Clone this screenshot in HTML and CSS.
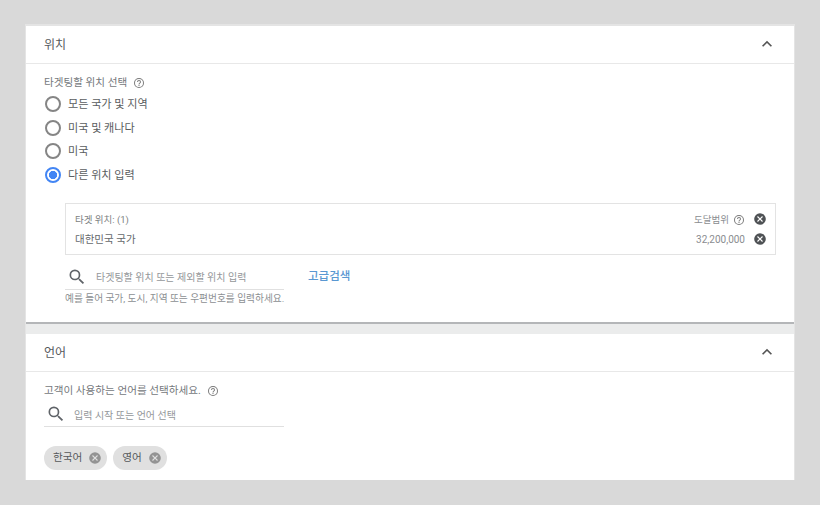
FILE: index.html
```html
<!DOCTYPE html>
<html lang="ko">

<head>
    <meta charset="UTF-8">
    <meta name="viewport" content="width=device-width, initial-scale=1.0">
    <title>위치 및 언어</title>

    <link rel="stylesheet" href="styles.css">
</head>

<body>

    <svg class="icon-defs" width="0" height="0">
        <symbol id="i-help" viewBox="0 0 24 24">
            <path fill="currentColor" d="M12 2a10 10 0 1 0 0 20 10 10 0 0 0 0-20zm0 18a8 8 0 1 1 0-16 8 8 0 0 1 0 16zm-1-4h2v2h-2zm1-10a4 4 0 0 0-4 4h2a2 2 0 1 1 4 0c0 2-3 1.75-3 5h2c0-2.25 3-2.5 3-5a4 4 0 0 0-4-4z" />
        </symbol>
        <symbol id="i-search" viewBox="0 0 24 24">
            <path fill="currentColor" d="M15.5 14h-.79l-.28-.27A6.47 6.47 0 0 0 16 9.5 6.5 6.5 0 1 0 9.5 16c1.61 0 3.09-.59 4.23-1.57l.27.28v.79l5 4.99L20.49 19l-4.99-5zm-6 0a4.5 4.5 0 1 1 0-9 4.5 4.5 0 0 1 0 9z" />
        </symbol>
        <symbol id="i-clear" viewBox="0 0 24 24">
            <path fill="currentColor" d="M12 2a10 10 0 1 0 0 20 10 10 0 0 0 0-20zm5 13.59L15.59 17 12 13.41 8.41 17 7 15.59 10.59 12 7 8.41 8.41 7 12 10.59 15.59 7 17 8.41 13.41 12 17 15.59z" />
        </symbol>
        <symbol id="i-up" viewBox="0 0 24 24">
            <path fill="currentColor" d="M12 8l-6 6 1.41 1.41L12 10.83l4.59 4.58L18 14z" />
        </symbol>
    </svg>

    <div class="page">

        <section class="panel panel-location">
            <div class="panel-head">
                <h2>위치</h2>
                <svg class="chevron"><use href="#i-up"></use></svg>
            </div>

            <div class="panel-body">
                <div class="field-label">타겟팅할 위치 선택 <svg class="help"><use href="#i-help"></use></svg></div>

                <div class="radio-list">
                    <div class="radio-row"><span class="radio"></span>모든 국가 및 지역</div>
                    <div class="radio-row"><span class="radio"></span>미국 및 캐나다</div>
                    <div class="radio-row"><span class="radio"></span>미국</div>
                    <div class="radio-row"><span class="radio checked"></span>다른 위치 입력</div>
                </div>

                <div class="target-box">
                    <div class="target-row small">
                        <span>타겟 위치: (1)</span>
                        <span class="reach">도달범위 <svg class="help"><use href="#i-help"></use></svg></span>
                        <svg class="clear"><use href="#i-clear"></use></svg>
                    </div>
                    <div class="target-row">
                        <span class="place">대한민국 국가</span>
                        <span class="reach">32,200,000</span>
                        <svg class="clear"><use href="#i-clear"></use></svg>
                    </div>
                </div>

                <div class="location-search">
                    <div class="search-col">
                        <div class="search-input">
                            <svg class="search"><use href="#i-search"></use></svg>
                            <span>타겟팅할 위치 또는 제외할 위치 입력</span>
                        </div>
                        <div class="hint">예를 들어 국가, 도시, 지역 또는 우편번호를 입력하세요.</div>
                    </div>
                    <a class="advanced">고급검색</a>
                </div>
            </div>
        </section>

        <section class="panel panel-language">
            <div class="panel-head">
                <h2>언어</h2>
                <svg class="chevron"><use href="#i-up"></use></svg>
            </div>

            <div class="panel-body">
                <div class="field-label">고객이 사용하는 언어를 선택하세요. <svg class="help"><use href="#i-help"></use></svg></div>

                <div class="search-input lang-input">
                    <svg class="search"><use href="#i-search"></use></svg>
                    <span>입력 시작 또는 언어 선택</span>
                </div>

                <div class="chips">
                    <div class="chip">한국어 <svg><use href="#i-clear"></use></svg></div>
                    <div class="chip">영어 <svg><use href="#i-clear"></use></svg></div>
                </div>
            </div>
        </section>

    </div>

</body>

</html>
```

FILE: styles.css
```css
*,
*::before,
*::after {
    margin: 0;
    padding: 0;
    box-sizing: border-box;
}

body {
    background-color: #d9d9d9;
    font-family: "Roboto", "Noto Sans CJK KR", sans-serif;
    color: #5f6368;
    font-size: 11px;
    line-height: 16px;
    height: 505px;
    overflow: hidden;
}

.icon-defs {
    position: absolute;
}

.page {
    width: 768px;
    margin: 26px 0 0 26px;
    background-color: #ebecec;
    box-shadow: 0 -1px 0 1px #e4e4e4;
}

.panel {
    background-color: #fff;
}

.panel-location {
    height: 298px;
    border-bottom: 2px solid #b4b6b8;
}

.panel-language {
    height: 146px;
    margin-top: 10px;
}

.panel-head {
    height: 38px;
    padding: 0 17px 0 18px;
    border-bottom: 1px solid #e8e8e8;
    display: flex;
    align-items: center;
    justify-content: space-between;
}

.panel-head h2 {
    font-size: 12px;
    font-weight: 400;
    color: #55585b;
}

.chevron {
    width: 20px;
    height: 20px;
    margin-bottom: 2px;
    color: #555;
}

.panel-body {
    padding: 11px 18px 0;
}

.field-label {
    display: flex;
    align-items: center;
    gap: 6px;
    height: 16px;
    font-size: 10.6px;
    color: #75787c;
}

.help {
    width: 12px;
    height: 12px;
    color: #7b7b7b;
}

.radio-list {
    margin-top: 1px;
}

.radio-row {
    display: flex;
    align-items: center;
    height: 23.7px;
    padding-top: 2px;
    font-size: 11.1px;
    color: #5a5d60;
}

.radio {
    width: 16px;
    height: 16px;
    margin: 0 7px 2px 1px;
    border: 2px solid #858585;
    border-radius: 50%;
}

.radio.checked {
    border-color: #4285f4;
    background: radial-gradient(circle, #4285f4 0 3.8px, transparent 4.4px);
}

.target-box {
    margin: 16px 0 0 21px;
    width: 711px;
    height: 52px;
    border: 1px solid #e3e3e3;
    padding: 5px 8px 0 9px;
}

.target-row {
    display: flex;
    align-items: center;
    height: 20px;
    padding-top: 2px;
    font-size: 10.5px;
    color: #65686c;
}

.target-row.small {
    font-size: 9.5px;
    color: #7c7f82;
}

.target-row .reach {
    margin-left: auto;
    display: flex;
    align-items: center;
    gap: 4px;
    color: #8a8d90;
    font-size: 10px;
}

.target-row.small .reach {
    font-size: 9.5px;
}

.clear {
    width: 14px;
    height: 14px;
    margin: 0 0 2px 8px;
    color: #4f5255;
}

.location-search {
    display: flex;
    margin: 8px 0 0 21px;
}

.search-col {
    width: 219px;
}

.search-input {
    display: flex;
    align-items: center;
    height: 27px;
    padding-top: 2px;
    border-bottom: 1px solid #e0e0e0;
    font-size: 10px;
    color: #94979a;
}

.search-input span {
    padding-top: 2px;
}

.search {
    width: 20px;
    height: 20px;
    margin: 0 9.5px 0 1.5px;
    color: #5f6368;
}

.hint {
    margin-top: 1px;
    font-size: 9.7px;
    white-space: nowrap;
    color: #8c8f92;
}

.advanced {
    margin: 5px 0 0 24px;
    font-size: 11.5px;
    font-weight: 500;
    color: #5a98d2;
}

.lang-input {
    width: 240px;
    height: 28px;
    padding-top: 3px;
}

.lang-input span {
    padding-top: 3px;
}

.lang-input .search {
    margin-right: 8.5px;
}

.chips {
    display: flex;
    gap: 6px;
    margin-top: 19px;
}

.chip {
    display: flex;
    align-items: center;
    justify-content: space-between;
    height: 24px;
    padding: 0 5px 0 9px;
    border-radius: 12px;
    background-color: #e0e0e0;
    font-size: 10.6px;
    color: #55585b;
}

.chip svg {
    width: 14px;
    height: 14px;
    margin-left: 6px;
    color: #939393;
}
```
